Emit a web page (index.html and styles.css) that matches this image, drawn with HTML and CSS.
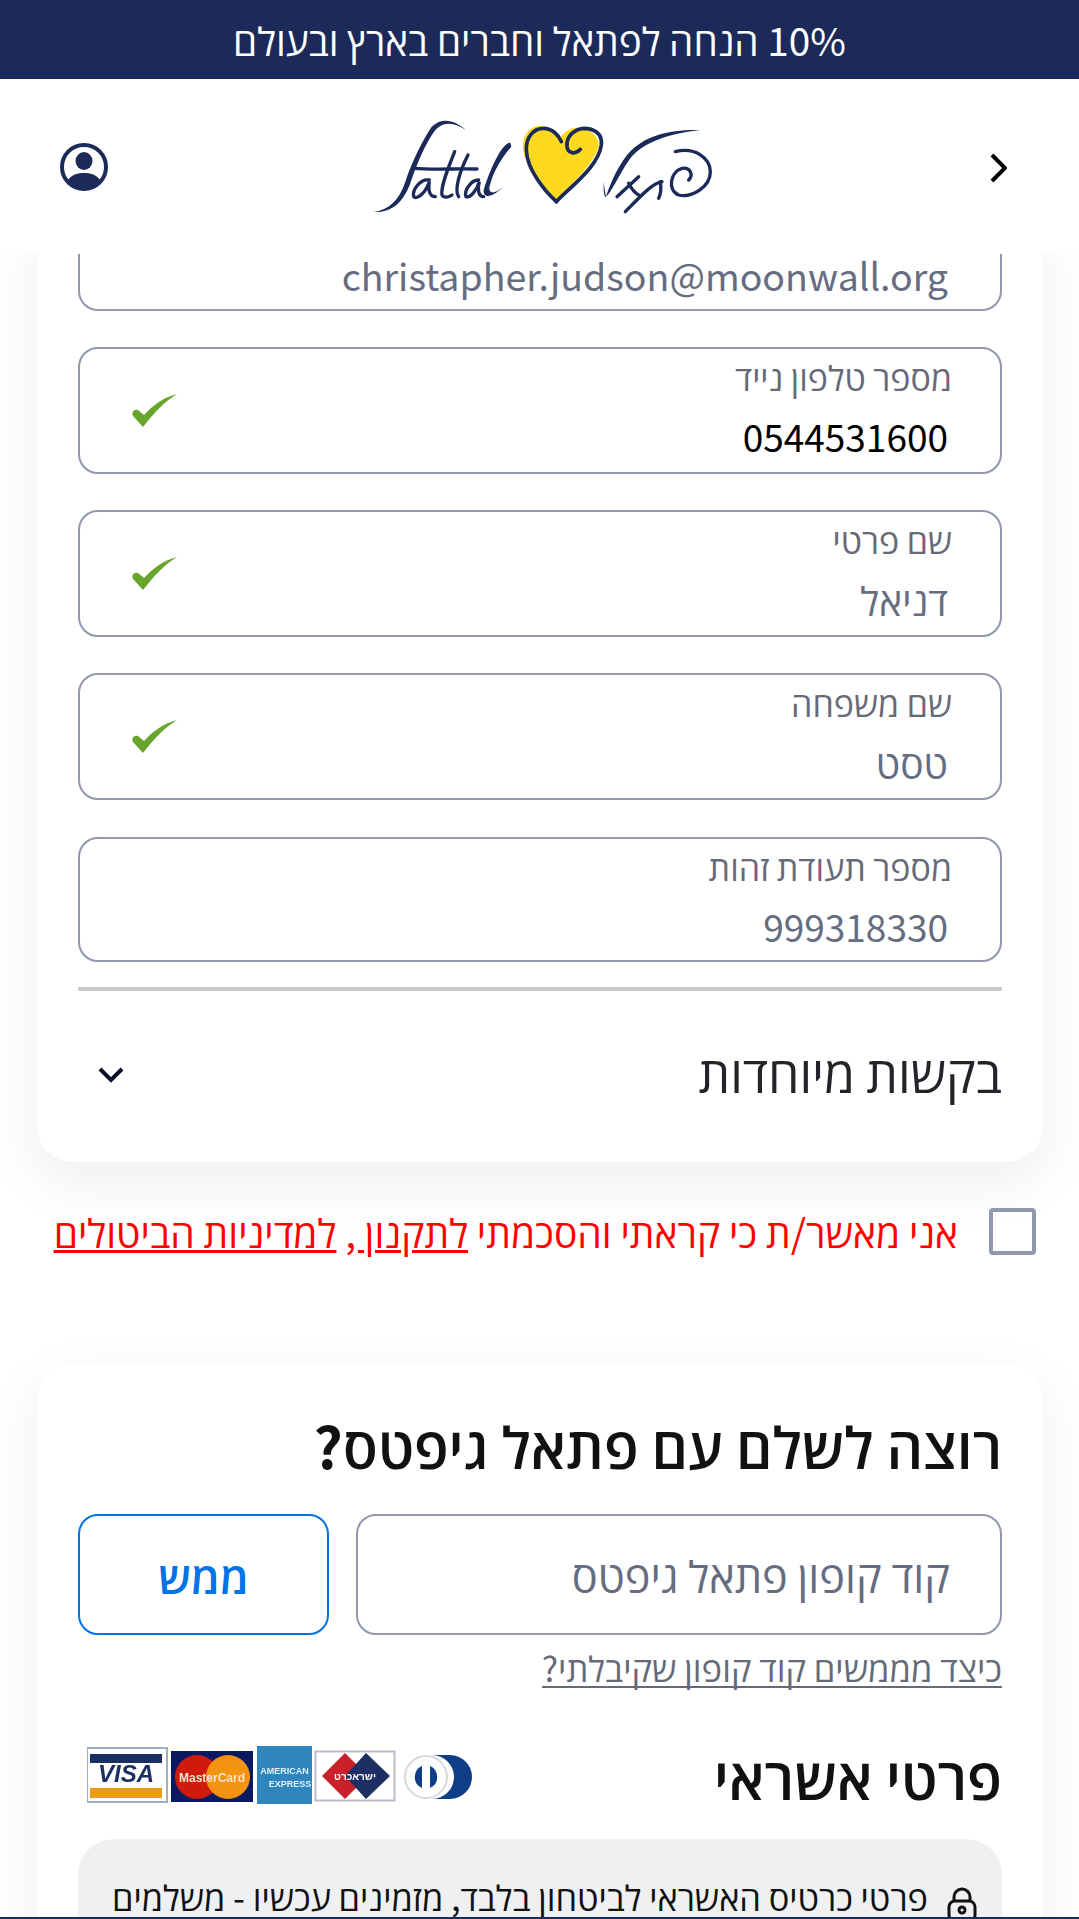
FILE: index.html
```html
<!DOCTYPE html>
<html lang="he" dir="rtl">

<head>
    <meta charset="UTF-8">
    <title>פתאל - תשלום</title>
    <link rel="stylesheet" href="styles.css">
</head>

<body>
    <div class="promo">10% הנחה לפתאל וחברים בארץ ובעולם</div>

    <header class="header">
        <svg class="chevron" viewBox="0 0 17 30"><path d="M2 2 L15 15 L2 28" /></svg>
        <svg class="logo" viewBox="0 0 1200 390">
            <path class="heart-fill" d="M600 78 C560 75 538 110 544 150 C552 210 600 270 640 302 C690 250 750 200 770 140 C775 100 720 75 690 85 C665 95 652 115 652 115 C640 95 625 82 600 78 Z" />
            <g class="logo-lines">
                <path d="M643 305 C610 275 555 210 553 150 C552 110 575 85 605 85 C630 85 650 105 658 125" />
                <path d="M643 305 C680 265 770 200 778 135 C782 100 755 85 725 85 C695 88 672 110 675 140 C678 160 700 165 715 148" />
            </g>
            <g class="logo-solid">
                <path d="M372 90 C340 62 300 48 268 82 C240 125 212 180 190 245 C172 300 140 330 95 336 C150 340 185 305 205 250 C225 190 250 130 280 90 C305 62 340 68 372 90 Z" />
                <path d="M505 128 C485 125 450 190 425 270 C422 295 450 295 482 262 C455 285 440 280 442 262 C455 205 490 160 508 140 Z" />
                <path d="M1075 90 C985 88 905 105 855 165 C825 205 805 250 792 290 C788 270 786 255 785 245 C785 265 784 280 790 292 C805 285 830 225 865 175 C905 125 985 100 1075 90 Z" />
            </g>
            <g class="logo-lines thin">
                <path d="M215 205 C280 210 340 205 405 207" />
                <path d="M262 240 C235 235 210 270 215 290 C225 300 250 280 262 245 C258 270 262 290 280 290" />
                <path d="M338 155 C320 200 295 260 300 285 C305 295 320 292 330 285" />
                <path d="M378 165 C355 210 335 270 350 290" />
                <path d="M410 240 C385 240 365 275 372 290 C385 295 405 270 412 245 C405 270 410 290 425 290" />
                <path d="M1000 155 C1060 140 1105 175 1105 215 C1105 260 1050 295 1010 285 C975 270 985 215 1020 205 C1045 200 1055 225 1040 240" />
                <path d="M890 230 L825 290" />
                <path d="M860 250 C870 270 880 280 890 285" />
                <path d="M960 245 C930 250 895 290 850 335" />
                <path d="M955 245 C958 265 955 285 950 295" />
            </g>
        </svg>
        <svg class="user" viewBox="0 0 48 48">
            <circle class="user-ring" cx="24" cy="24" r="22" />
            <ellipse class="user-part" cx="24" cy="18" rx="8.5" ry="9" />
            <path class="user-part" d="M8 37 C12 31 18 30 24 30 C30 30 36 31 40 37 C36 43 30 46 24 46 C18 46 12 43 8 37 Z" />
        </svg>
    </header>

    <main class="page">
        <section class="card card-guest">
            <div class="field field-cut">
                <div class="field-text">
                    <div class="value value-latin">christapher.judson@moonwall.org</div>
                </div>
            </div>
            <div class="field">
                <div class="field-text">
                    <label class="label">מספר טלפון נייד</label>
                    <div class="value value-num value-dark">0544531600</div>
                </div>
                <svg class="check" viewBox="0 0 45 33"><path d="M45 0 C32 8 22 19 11 33 L1 22 C-1 18 2 15 6 16 L12 21 C20 12 32 3 45 0 Z" /></svg>
            </div>
            <div class="field">
                <div class="field-text">
                    <label class="label">שם פרטי</label>
                    <div class="value">דניאל</div>
                </div>
                <svg class="check" viewBox="0 0 45 33"><path d="M45 0 C32 8 22 19 11 33 L1 22 C-1 18 2 15 6 16 L12 21 C20 12 32 3 45 0 Z" /></svg>
            </div>
            <div class="field">
                <div class="field-text">
                    <label class="label">שם משפחה</label>
                    <div class="value">טסט</div>
                </div>
                <svg class="check" viewBox="0 0 45 33"><path d="M45 0 C32 8 22 19 11 33 L1 22 C-1 18 2 15 6 16 L12 21 C20 12 32 3 45 0 Z" /></svg>
            </div>
            <div class="field field-last">
                <div class="field-text">
                    <label class="label">מספר תעודת זהות</label>
                    <div class="value value-num">999318330</div>
                </div>
            </div>
            <div class="requests">
                <span class="requests-title">בקשות מיוחדות</span>
                <svg class="requests-arrow" viewBox="0 0 26 16"><path d="M2 2 L13 13 L24 2" /></svg>
            </div>
        </section>

        <div class="terms">
            <span class="checkbox"></span>
            <p class="terms-text">אני מאשר/ת כי קראתי והסכמתי <a href="#">לתקנון ,</a> <a href="#">למדיניות הביטולים</a></p>
        </div>

        <section class="card card-pay">
            <h2 class="gift-title">רוצה לשלם עם פתאל גיפטס?</h2>
            <div class="coupon">
                <div class="coupon-input">קוד קופון פתאל גיפטס</div>
                <button class="coupon-btn">ממש</button>
            </div>
            <div class="coupon-help"><a href="#">כיצד מממשים קוד קופון שקיבלתי?</a></div>

            <div class="pay-head">
                <h2 class="pay-title">פרטי אשראי</h2>
                <svg class="cards" viewBox="87 1745 385 58">
                    <rect x="87" y="1747" width="80" height="54" fill="#fff" stroke="#9fb0bd" stroke-width="2" />
                    <rect x="90" y="1753" width="72" height="9" fill="#1b2f63" />
                    <rect x="90" y="1787" width="72" height="10" fill="#e89c17" />
                    <text x="126" y="1781" class="card-visa">VISA</text>
                    <rect x="171" y="1750" width="82" height="51" fill="#0a1a62" />
                    <circle cx="197" cy="1776" r="22" fill="#cf1a0c" />
                    <circle cx="228" cy="1776" r="22" fill="#f4930f" />
                    <text x="212" y="1781" class="card-mc">MasterCard</text>
                    <rect x="257" y="1745" width="55" height="58" fill="#2f86bf" />
                    <text x="284.500" y="1773" class="card-amex">AMERICAN</text>
                    <text x="290" y="1786" class="card-amex">EXPRESS</text>
                    <rect x="315.500" y="1750.500" width="79" height="49" fill="#fff" stroke="#b9bdc9" stroke-width="2" />
                    <path d="M322 1775 L345 1752 L368 1775 L345 1798 Z" fill="#c9202a" />
                    <path d="M345 1775 L366 1752 L390 1775 L366 1798 Z" fill="#1d2e63" />
                    <text x="355" y="1779" class="card-isra">ישראכרט</text>
                    <circle cx="426" cy="1776" r="21" fill="#fff" stroke="#d6d8de" stroke-width="2" />
                    <path d="M445 1754 L450 1754 A22 22 0 0 1 450 1798 L432 1798 A22 22 0 0 0 432 1754 Z" fill="#0e3f86" />
                    <circle cx="426" cy="1776" r="14" fill="#fff" />
                    <path d="M422 1765 A12 12 0 0 0 422 1787 Z M430 1765 A12 12 0 0 1 430 1787 Z" fill="#0e3f86" />
                </svg>
            </div>

            <div class="secure">
                <svg class="lock" viewBox="0 0 30 36">
                    <path d="M7 14 V10 A8 8 0 0 1 23 10 V14" />
                    <rect x="2" y="14" width="26" height="20" rx="6" />
                    <circle cx="15" cy="23" r="3" />
                </svg>
                <p class="secure-text">פרטי כרטיס האשראי לביטחון בלבד, מזמינים עכשיו - משלמים</p>
            </div>
        </section>
    </main>

    <div class="bottom-line"></div>
</body>

</html>
```

FILE: styles.css
```css
* {
    margin: 0;
    padding: 0;
    box-sizing: border-box;
}

html,
body {
    height: 100%;
    overflow: hidden;
}

body {
    position: relative;
    background: #fff;
    font-family: "Noto Sans CJK SC", "Open Sans", "Noto Sans", sans-serif;
    color: #212529;
}

/* top of page */

.promo {
    height: 79px;
    background: #1b2a58;
    color: #fff;
    font-size: 38.7px;
    line-height: 78px;
    text-align: center;
}

.header {
    position: relative;
    z-index: 2;
    height: 175px;
    background: #fff;
    display: flex;
    align-items: center;
    justify-content: space-between;
    padding: 0 72px 0 60px;
}

.chevron {
    width: 17px;
    height: 30px;
    margin-top: 3px;
    fill: none;
    stroke: #000;
    stroke-width: 4;
}

.logo {
    width: 400px;
    height: 130px;
    margin-top: -3px;
    margin-left: -15px;
}

.heart-fill {
    fill: #fdd91f;
}

.logo-lines {
    fill: none;
    stroke: #1b2a58;
    stroke-width: 11;
    stroke-linecap: round;
}

.logo-lines.thin {
    stroke-width: 10;
}

.logo-solid {
    fill: #1b2a58;
}

.user {
    width: 48px;
    height: 48px;
}

.user-ring {
    fill: #fff;
    stroke: #1b2a58;
    stroke-width: 4;
}

.user-part {
    fill: #1b2a58;
}

/* cards */

.card {
    background: #fff;
    border-radius: 36px;
    margin: 0 36px 0 37px;
    padding: 0 41px;
    box-shadow: 0 20px 60px rgba(0, 0, 0, .07);
}

.card-guest {
    margin-top: -40px;
    padding-top: 40px;
    padding-bottom: 10px;
}

.field {
    height: 127px;
    margin-bottom: 36px;
    border: 2px solid #9297b0;
    border-radius: 20px;
    display: flex;
    align-items: flex-start;
    background: #fff;
    padding: 6px 52px 0 52px;
}

.field-cut {
    height: 57px;
    align-items: center;
    padding-top: 0;
    padding-bottom: 13px;
    border-top: 0;
    border-top-left-radius: 0;
    border-top-right-radius: 0;
}

.field-last {
    height: 125px;
    margin-top: 37px;
    margin-bottom: 25px;
}

.field-text {
    flex: 1;
}

.label {
    display: block;
    font-size: 34px;
    line-height: 44px;
    color: #666a78;
    margin: 0 -4px 12px;
}

.value {
    font-size: 39px;
    line-height: 50px;
    color: #666d80;
}

.value-num {
    font-size: 37px;
}

.value-dark {
    color: #000;
}

.value-latin {
    font-size: 37.500px;
    line-height: 52px;
}

.check {
    align-self: center;
    width: 45px;
    height: 33px;
    margin-top: -6px;
    fill: #68a52c;
}

.requests {
    height: 165px;
    border-top: 4px solid #c9c9cb;
    display: flex;
    align-items: center;
    justify-content: space-between;
}

.requests-title {
    font-size: 50px;
}

.requests-arrow {
    width: 26px;
    height: 16px;
    margin-left: 20px;
    margin-top: 6px;
    fill: none;
    stroke: #0a0e2a;
    stroke-width: 4;
}

/* terms */

.terms {
    display: flex;
    align-items: center;
    gap: 31px;
    padding-right: 43px;
    margin-top: 46px;
}

.checkbox {
    flex: none;
    width: 47px;
    height: 47px;
    border: 4px solid #9297b0;
    border-radius: 4px;
}

.terms-text {
    font-size: 39px;
    line-height: 47px;
    color: #f00;
    white-space: nowrap;
}

.terms-text a {
    color: #f00;
}

/* pay card */

.card-pay {
    margin-top: 108px;
    padding-top: 46px;
    height: 800px;
}

.gift-title {
    font-size: 57px;
    font-weight: 600;
    line-height: 70px;
    color: #111;
}

.coupon {
    display: flex;
    gap: 27px;
    margin-top: 35px;
}

.coupon-input {
    flex: 1;
    height: 121px;
    border: 2px solid #9297b0;
    border-radius: 20px;
    font-size: 43.300px;
    line-height: 117px;
    padding-right: 50px;
    color: #666d80;
}

.coupon-btn {
    width: 251px;
    height: 121px;
    background: #fff;
    border: 2px solid #0073e6;
    border-radius: 20px;
    font-family: inherit;
    font-size: 44px;
    font-weight: 600;
    color: #0073e6;
}

.coupon-help {
    margin-top: 13px;
    height: 40px;
}

.coupon-help a {
    display: inline-block;
    font-size: 34.600px;
    line-height: 38px;
    color: #666a78;
    text-decoration: none;
    border-bottom: 2px solid #666a78;
}

.pay-head {
    display: flex;
    align-items: center;
    justify-content: space-between;
    margin-top: 57px;
    height: 60px;
}

.pay-title {
    font-size: 57.500px;
    font-weight: 600;
    color: #111;
}

.cards {
    width: 385px;
    height: 58px;
    margin-left: 9px;
    filter: blur(.6px);
}

.card-visa {
    font-family: "Liberation Sans", sans-serif;
    font-size: 24px;
    font-weight: 700;
    font-style: italic;
    fill: #1b2f63;
    text-anchor: middle;
}

.card-mc {
    font-family: "Liberation Sans", sans-serif;
    font-size: 12px;
    font-weight: 700;
    fill: #f3e3d0;
    text-anchor: middle;
}

.card-amex {
    font-family: "Liberation Sans", sans-serif;
    font-size: 9px;
    font-weight: 700;
    fill: #dfeef7;
    text-anchor: middle;
}

.card-isra {
    font-family: "Liberation Sans", sans-serif;
    font-size: 10px;
    font-weight: 700;
    fill: #fff;
    text-anchor: middle;
}

.secure {
    margin-top: 34px;
    background: #eff0f2;
    border-radius: 36px;
    height: 300px;
    display: flex;
    align-items: flex-start;
    gap: 19px;
    padding: 35px 25px 0 0;
}

.lock {
    flex: none;
    width: 30px;
    height: 36px;
    margin-top: 13px;
    fill: none;
    stroke: #111;
    stroke-width: 3;
}

.secure-text {
    font-size: 34.400px;
    line-height: 44px;
    color: #111;
    white-space: nowrap;
}

.bottom-line {
    position: absolute;
    left: 0;
    right: 0;
    bottom: 0;
    height: 2px;
    background: #1b2a58;
    z-index: 3;
}
```
